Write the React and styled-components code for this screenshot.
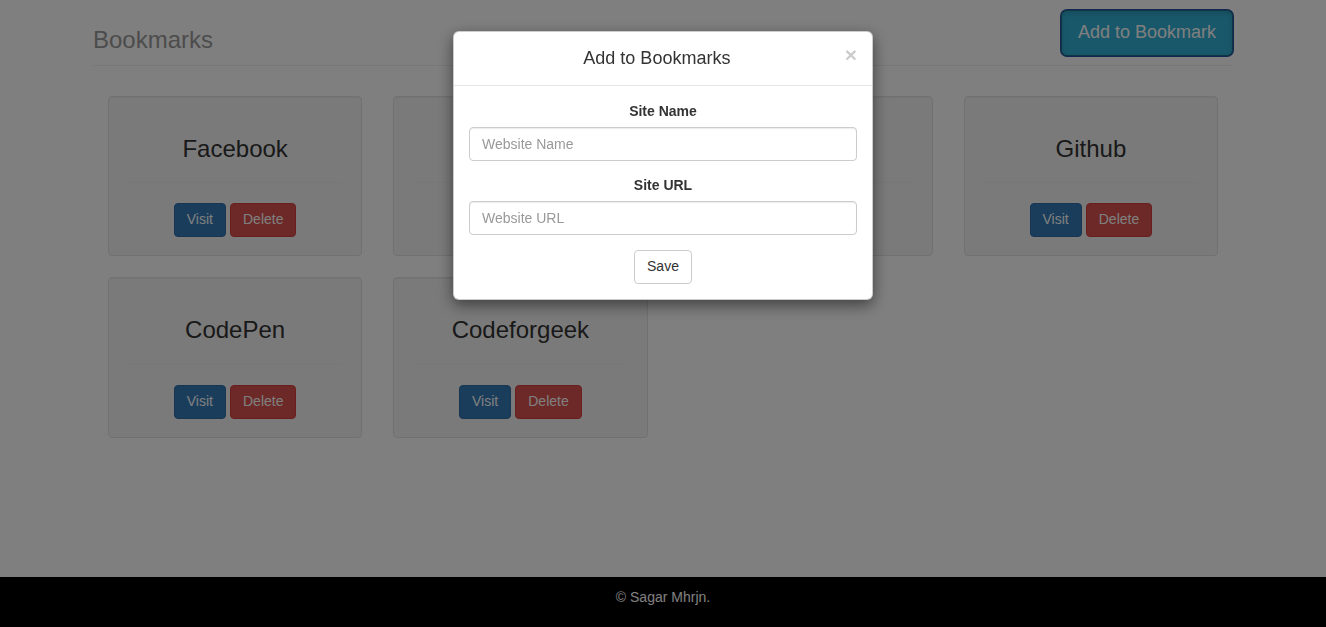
import React, { useState } from 'react'
import styled, { createGlobalStyle } from 'styled-components'

const GlobalStyle = createGlobalStyle`
  * { box-sizing: border-box; }
  html, body { margin: 0; padding: 0; }
  body {
    font-family: "Liberation Sans", Arial, Helvetica, sans-serif;
    font-size: 14px;
    line-height: 1.42857;
    color: #333;
    background: #fff;
  }
`

const Page = styled.div`
  display: flex;
  flex-direction: column;
  min-height: 100vh;
`

const Main = styled.main`
  flex: 1;
  width: 1170px;
  margin: 0 auto;
  padding: 0 15px;
`

const Header = styled.header`
  display: flex;
  justify-content: space-between;
  align-items: flex-end;
  padding-top: 10px;
  border-bottom: 1px solid #eee;
`

const Title = styled.h3`
  margin: 0 0 12px;
  font-size: 24px;
  font-weight: 500;
  line-height: 1.1;
  color: #999;
`

const Button = styled.button`
  display: inline-block;
  font-family: inherit;
  font-size: ${p => (p.large ? '18px' : '14px')};
  line-height: ${p => (p.large ? '1.3333' : '1.42857')};
  padding: ${p => (p.large ? '10px 16px' : '6px 12px')};
  border-radius: ${p => (p.large ? '6px' : '4px')};
  border: 1px solid ${p => p.border};
  background: ${p => p.bg};
  color: ${p => p.fg || '#fff'};
  cursor: pointer;
  &:focus { outline: none; }
`

const AddButton = styled(Button)`
  margin-bottom: 9px;
  box-shadow: inset 0 3px 5px rgba(0,0,0,.125), 0 0 0 1px #2a4fa0;
`

const Grid = styled.div`
  display: grid;
  grid-template-columns: repeat(4, 1fr);
  column-gap: 31px;
  row-gap: 21px;
  padding: 30px 15px 0;
`

const Well = styled.div`
  background: #f5f5f5;
  border: 1px solid #e3e3e3;
  border-radius: 4px;
  box-shadow: inset 0 1px 1px rgba(0,0,0,.05);
  padding: 19px 19px 18px;
  text-align: center;
`

const SiteName = styled.h3`
  margin: 20px 0 0;
  font-size: 24px;
  font-weight: 500;
  line-height: 1.1;
  color: #333;
`

const Rule = styled.hr`
  margin: 20px 0;
  border: 0;
  border-top: 1px solid #eee;
`

const Actions = styled.div`
  display: flex;
  justify-content: center;
  gap: 4px;
`

const Footer = styled.footer`
  height: 50px;
  background: #000;
  color: #fff;
  text-align: center;
  padding-top: 10px;
  line-height: 20px;
`

const Backdrop = styled.div`
  position: fixed;
  inset: 0;
  background: rgba(0,0,0,.5);
  z-index: 10;
`

const ModalWrap = styled.div`
  position: fixed;
  inset: 0;
  z-index: 20;
  display: flex;
  justify-content: center;
  align-items: flex-start;
  padding-top: 31px;
`

const Dialog = styled.div`
  width: 420px;
  background: #fff;
  border: 1px solid rgba(0,0,0,.2);
  border-radius: 6px;
  box-shadow: 0 5px 15px rgba(0,0,0,.5);
`

const DialogHead = styled.div`
  display: flex;
  align-items: flex-start;
  padding: 14px 15px 15px;
  border-bottom: 1px solid #e5e5e5;
`

const DialogTitle = styled.h4`
  flex: 1;
  margin: 0;
  font-size: 18px;
  font-weight: 500;
  line-height: 24px;
  text-align: center;
  color: #333;
`

const Close = styled.button`
  margin-top: -2px;
  padding: 0;
  border: 0;
  background: transparent;
  font-family: inherit;
  font-size: 21px;
  font-weight: 700;
  line-height: 1;
  color: #000;
  opacity: .2;
  text-shadow: 0 1px 0 #fff;
  cursor: pointer;
`

const DialogBody = styled.form`
  padding: 16px 15px 15px;
  text-align: center;
`

const Group = styled.div`
  margin-bottom: 15px;
`

const Label = styled.label`
  display: block;
  margin-bottom: 5px;
  font-weight: 700;
`

const Input = styled.input`
  display: block;
  width: 100%;
  height: 34px;
  padding: 6px 12px;
  font-family: inherit;
  font-size: 14px;
  color: #555;
  border: 1px solid #ccc;
  border-radius: 4px;
  box-shadow: inset 0 1px 1px rgba(0,0,0,.075);
  &::placeholder { color: #999; }
  &:focus { outline: none; }
`

const sites = ['Facebook', 'Google', 'Youtube', 'Github', 'CodePen', 'Codeforgeek']

const App = () => {
  const [open, setOpen] = useState(true)

  return (
    <Page>
      <GlobalStyle />
      <Main>
        <Header>
          <Title>Bookmarks</Title>
          <AddButton large bg="#31b0d5" border="#1b6d85" onClick={() => setOpen(true)}>
            Add to Bookmark
          </AddButton>
        </Header>
        <Grid>
          {sites.map(name => (
            <Well key={name}>
              <SiteName>{name}</SiteName>
              <Rule />
              <Actions>
                <Button bg="#337ab7" border="#2e6da4">Visit</Button>
                <Button bg="#d9534f" border="#d43f3a">Delete</Button>
              </Actions>
            </Well>
          ))}
        </Grid>
      </Main>
      <Footer>© Sagar Mhrjn.</Footer>
      {open && (
        <>
          <Backdrop />
          <ModalWrap>
            <Dialog>
              <DialogHead>
                <DialogTitle>Add to Bookmarks</DialogTitle>
                <Close type="button" onClick={() => setOpen(false)}>×</Close>
              </DialogHead>
              <DialogBody onSubmit={e => e.preventDefault()}>
                <Group>
                  <Label htmlFor="site-name">Site Name</Label>
                  <Input id="site-name" type="text" placeholder="Website Name" />
                </Group>
                <Group>
                  <Label htmlFor="site-url">Site URL</Label>
                  <Input id="site-url" type="text" placeholder="Website URL" />
                </Group>
                <Button type="submit" bg="#fff" border="#ccc" fg="#333">Save</Button>
              </DialogBody>
            </Dialog>
          </ModalWrap>
        </>
      )}
    </Page>
  )
}

export default App
